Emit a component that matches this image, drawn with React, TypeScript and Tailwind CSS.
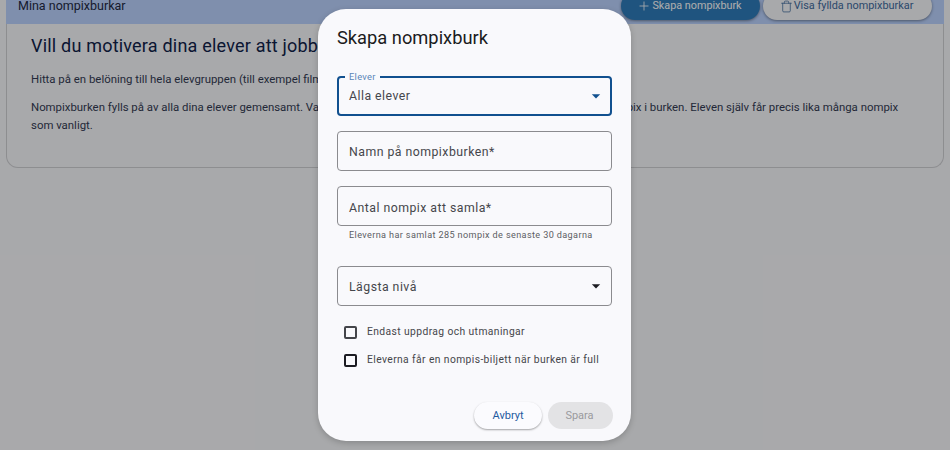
import { Plus, Trash } from "lucide-react";

const font = { fontFamily: "Roboto, sans-serif" };

function Caret({ color }: { color: string }) {
  return (
    <svg width="20" height="20" viewBox="0 0 24 24" className="shrink-0" fill={color}>
      <path d="M7 10l5 5 5-5z" />
    </svg>
  );
}

function Field({ label, offset }: { label: string; offset: string }) {
  return (
    <div className={`flex h-[40px] items-center rounded-[4px] border border-[#8b8b8f] px-[11px] text-[12.3px] tracking-[0.47px] text-[#45464b] ${offset}`}>
      {label}
    </div>
  );
}

function Check({ label, dark }: { label: string; dark?: boolean }) {
  return (
    <div className="flex h-[28px] items-center gap-[10px] pl-[7px]">
      <div className={`h-[13px] w-[13px] shrink-0 rounded-[2px] border-2 ${dark ? "border-[#1c1c22]" : "border-[#44454a]"}`} />
      <span className="whitespace-nowrap text-[10.3px] tracking-[0.4px] text-[#45464b]">{label}</span>
    </div>
  );
}

export default function App() {
  return (
    <div className="relative h-[450px] w-[950px] overflow-hidden bg-[#f8f9fc] px-[6px]" style={font}>
      <div className="-mt-[14px] flex h-[38px] items-start justify-between rounded-t-[12px] bg-[#bbd3ff] pl-[12px] pr-[12px]">
        <span className="mt-[12px] text-[12.5px] leading-[16px] text-[#1f2a44]">Mina nompixburkar</span>
        <div className="mt-[6px] flex gap-[3px]">
          <button className="flex h-[28px] w-[139px] items-center justify-center gap-[1px] rounded-full bg-[#2f7dbb] pr-[2px] text-[10.8px] text-white shadow-[0_1px_3px_rgba(0,0,0,0.4)]">
            <Plus size={14} strokeWidth={1.4} />
            Skapa nompixburk
          </button>
          <button className="flex h-[28px] w-[169px] items-center justify-center gap-[1px] rounded-full bg-[#f8f9fc] pr-[2px] text-[10.9px] text-[#3f6c9f] shadow-[0_1px_3px_rgba(0,0,0,0.4)]">
            <Trash size={13} strokeWidth={1.4} />
            Visa fyllda nompixburkar
          </button>
        </div>
      </div>

      <div className="h-[144px] rounded-b-[12px] border border-t-0 border-[#d0d1d5] pl-[24px] pr-[40px] pt-[10px] text-[#343c54]">
        <h1 className="whitespace-nowrap text-[18px] leading-[24px] tracking-[0.2px] text-[#10224a]">
          Vill du motivera dina elever att jobba lite extra?
        </h1>
        <p className="mt-[12px] whitespace-nowrap text-[11.4px] leading-[18px]">
          Hitta på en belöning till hela elevgruppen (till exempel filmvisning eller extra rast) och skapa en nompixburk.
        </p>
        <p className="mt-[10px] text-[11.4px] leading-[18px]">
          Nompixburken fylls på av alla dina elever gemensamt. Varje gång en elev tjänar in nompix hamnar det lika många nompix i burken. Eleven själv får precis lika många nompix som vanligt.
        </p>
      </div>

      <div className="absolute inset-0 bg-black/32" />

      <div className="absolute left-[318px] top-[9px] flex h-[432px] w-[313px] flex-col rounded-[28px] bg-[#f9f9fc] px-[19px] pt-[17px] shadow-[0_2px_6px_rgba(0,0,0,0.2)]">
        <h2 className="text-[18.3px] leading-[24px] text-[#1b1b20]">Skapa nompixburk</h2>

        <div className="relative mt-[26px] flex h-[40px] items-center justify-between rounded-[4px] border-2 border-[#11508f] pl-[10px] pr-[4px] text-[12.3px] tracking-[0.47px] text-[#45464b]">
          <span className="absolute -top-[7px] left-[6px] bg-[#f9f9fc] px-[4px] text-[9.3px] leading-[12px] tracking-[0.3px] text-[#5a85b8]">
            Elever
          </span>
          Alla elever
          <Caret color="#11508f" />
        </div>

        <div className="mt-[15px]">
          <Field label="Namn på nompixburken*" offset="pt-[2px]" />
        </div>
        <div className="mt-[15px]">
          <Field label="Antal nompix att samla*" offset="pt-[4px]" />
        </div>
        <p className="mt-[2px] pl-[12px] text-[9.1px] leading-[14px] tracking-[0.38px] text-[#5c5d63]">
          Eleverna har samlat 285 nompix de senaste 30 dagarna
        </p>

        <div className="mt-[24px] flex h-[40px] items-center justify-between rounded-[4px] border border-[#8b8b8f] pl-[11px] pr-[5px] text-[12.3px] tracking-[0.47px] text-[#45464b]">
          <span className="pt-[2px]">Lägsta nivå</span>
          <Caret color="#1c1c22" />
        </div>

        <div className="mt-[12px] flex flex-col">
          <Check label="Endast uppdrag och utmaningar" />
          <Check label="Eleverna får en nompis-biljett när burken är full" dark />
        </div>

        <div className="-mr-[1px] mt-[28px] flex justify-end gap-[6px]">
          <button className="h-[27px] w-[68px] rounded-full bg-[#fbfbfe] pt-[1px] text-[11px] text-[#1f5a9e] shadow-[0_1px_2px_rgba(0,0,0,0.35)]">
            Avbryt
          </button>
          <button className="h-[27px] w-[65px] rounded-full bg-[#e3e3e5] pt-[1px] pr-[2px] text-[11px] text-[#9a9a9d]">Spara</button>
        </div>
      </div>
    </div>
  );
}
